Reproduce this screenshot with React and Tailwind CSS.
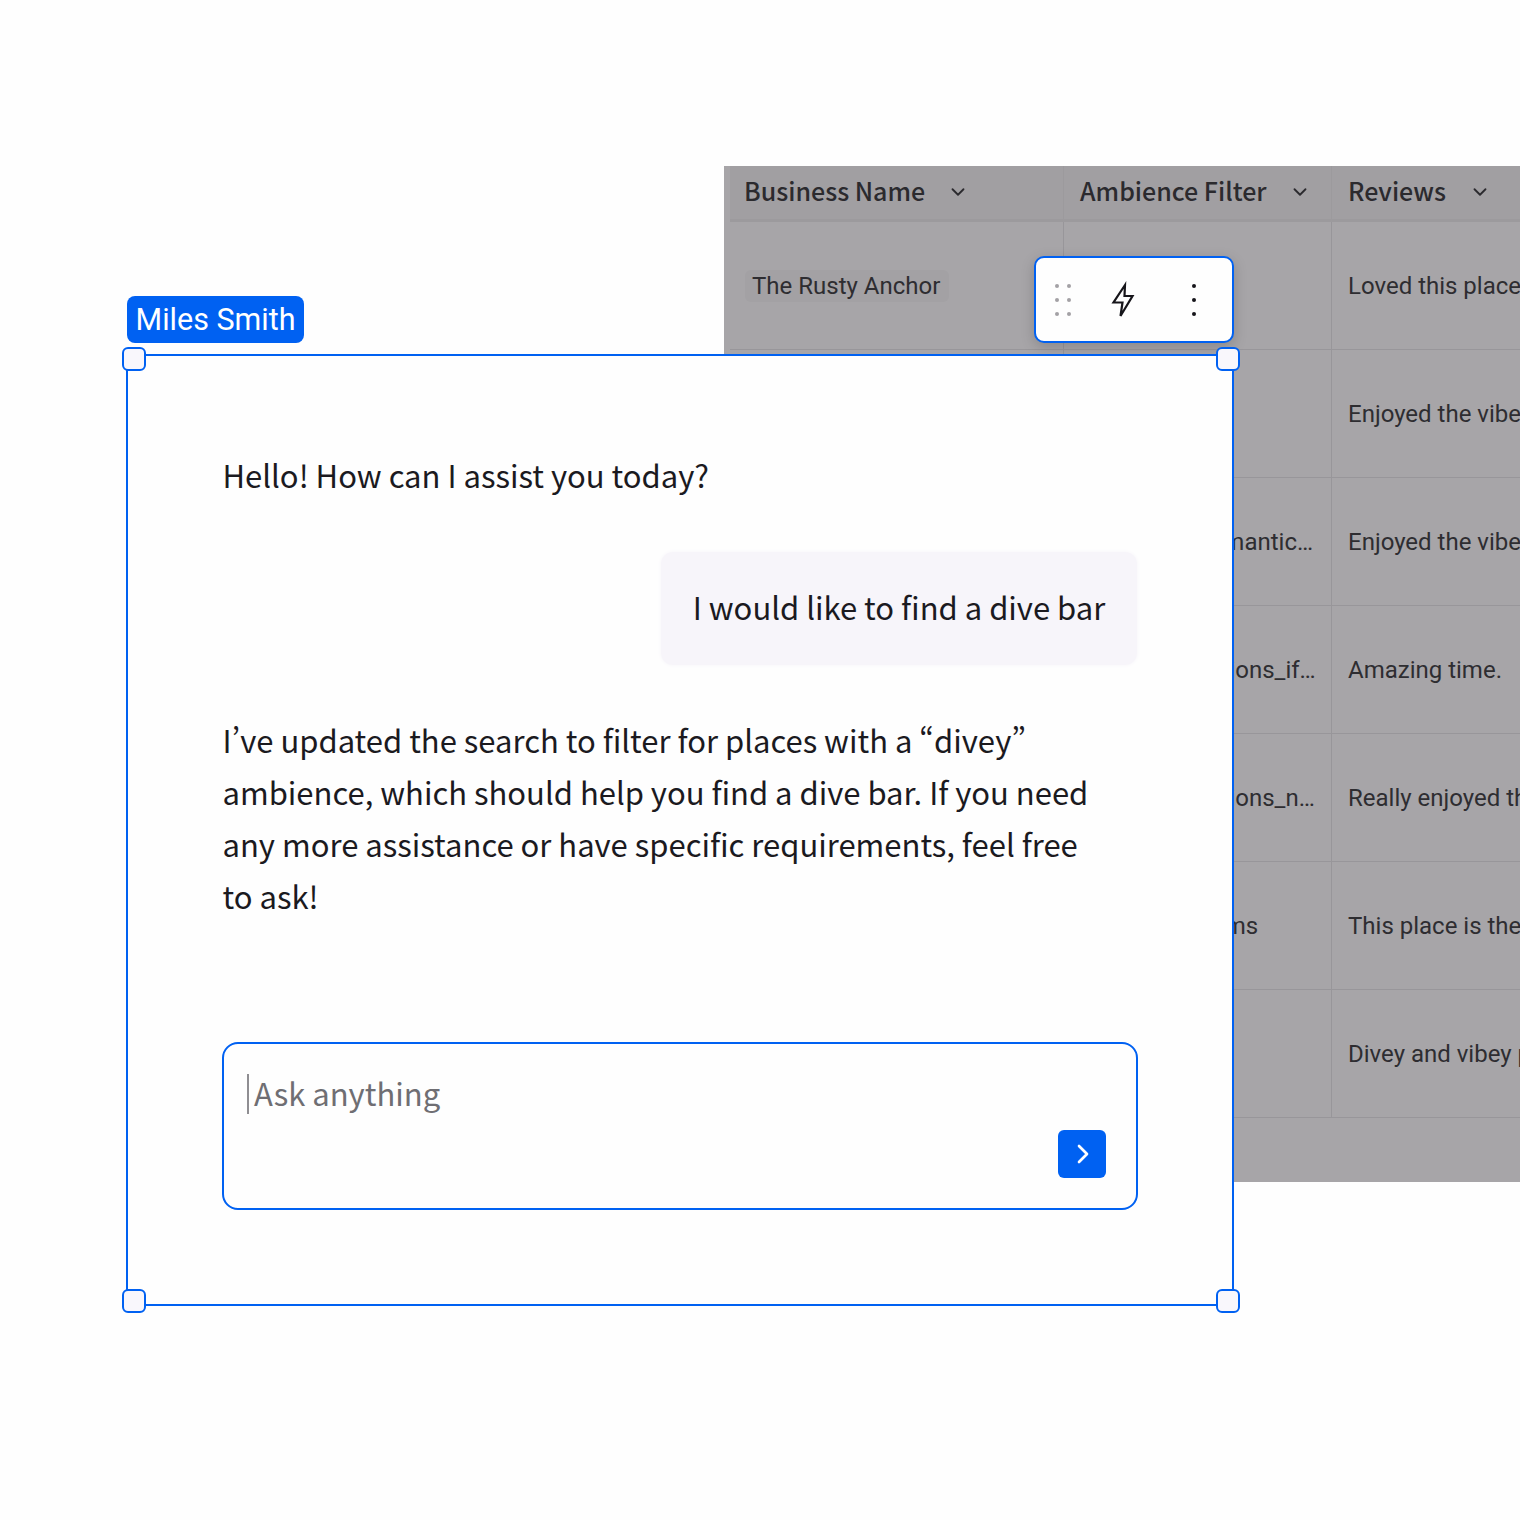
import React from 'react';
import { ChevronDown, ChevronRight } from 'lucide-react';

const rows = [
    { name: 'The Rusty Anchor', ambience: '', review: 'Loved this place, will be back' },
    { name: '', ambience: '', review: 'Enjoyed the vibe and the drinks' },
    { name: '', ambience: 'warm_and_romantic…', review: 'Enjoyed the vibe and the music' },
    { name: '', ambience: 'recommendations_if…', review: 'Amazing time.' },
    { name: '', ambience: 'recommendations_n…', review: 'Really enjoyed the atmosphere' },
    { name: '', ambience: 'cool_for_dreams', review: 'This place is the best in town' },
    { name: '', ambience: '', review: 'Divey and vibey place to hang out' },
];

const Handle = ({ className }) => (
    <div className={`absolute h-6 w-6 rounded-md border-2 border-[#0061f2] bg-[#f9f7fc] ${className}`}></div>
);

const HeaderCell = ({ label, className, chevronClass }) => (
    <div className={`relative flex h-full items-center whitespace-nowrap pb-1 ${className}`}>
        <span className="font-['Noto_Sans_CJK_SC',sans-serif] text-[25px] font-medium text-[#2b2a2e]">{label}</span>
        <ChevronDown className={`absolute top-[15px] h-[22px] w-[22px] text-[#2b2a2e] ${chevronClass}`} strokeWidth={2} />
    </div>
);

const Toolbar = () => (
    <div className="absolute left-[1034px] top-[256px] flex h-[87px] w-[200px] items-center rounded-[10px] border-2 border-[#0061f2] bg-[#fefefe] shadow-[0_4px_14px_rgba(0,0,0,0.18)]">
        <div className="ml-[19px] grid grid-cols-2 gap-x-[8px] gap-y-[10px]">
            {[0, 1, 2, 3, 4, 5].map((i) => (
                <span key={i} className="h-1 w-1 rounded-full bg-[#a3a1a5]"></span>
            ))}
        </div>
        <svg className="ml-[39px] h-[40px] w-[26px]" viewBox="0 0 26 40" fill="none">
            <path d="M15 5 L3.5 22.5 H12.5 L10.5 36 L22.5 16 H14.5 Z" stroke="#16151a" strokeWidth="2.2" strokeLinejoin="miter" />
        </svg>
        <div className="ml-[56px] flex flex-col gap-[10px]">
            <span className="h-1 w-1 rounded-full bg-[#16151a]"></span>
            <span className="h-1 w-1 rounded-full bg-[#16151a]"></span>
            <span className="h-1 w-1 rounded-full bg-[#16151a]"></span>
        </div>
    </div>
);

const ChatCard = () => (
    <div className="absolute left-[126px] top-[354px] flex h-[952px] w-[1108px] flex-col border-2 border-[#0061f2] bg-[#fefefe] pb-[94px] pl-[94px] pr-[95px] pt-[93px] font-['Noto_Sans_CJK_SC',sans-serif] text-[31px] leading-[52px] text-[#1b1a1f] [font-feature-settings:'pwid']">
        <Handle className="-left-[6px] -top-[9px]" />
        <Handle className="-right-[8px] -top-[9px]" />
        <Handle className="-bottom-[9px] -left-[6px]" />
        <Handle className="-bottom-[9px] -right-[8px]" />

        <p className="pl-[0.5px]">Hello! How can I assist you today?</p>

        <div className="mt-[51px] flex justify-end">
            <div className="flex h-[113px] w-[476px] items-center justify-center rounded-xl bg-[#f7f5fa] pb-1 shadow-[0_0_4px_#f7f5fa]">
                I would like to find a dive bar
            </div>
        </div>

        <p className="mt-[49px] pl-[0.5px]">
            I’ve updated the search to filter for places with a “divey”
            <br />
            ambience, which should help you find a dive bar. If you need
            <br />
            any more assistance or have specific requirements, feel free
            <br />
            to ask!
        </p>

        <div className="relative -mr-[1px] mt-auto h-[168px] rounded-2xl border-2 border-[#0061f2]">
            <div className="flex pl-[23px] pt-[23px] text-[#6f6e73]">
                <span className="mr-[5px] mt-[7px] h-[40px] w-[2px] bg-[#8f8e92]"></span>
                <span>Ask anything</span>
            </div>
            <button className="absolute bottom-[30px] right-[30px] flex h-12 w-12 items-center justify-center rounded-md bg-[#0061f2] text-white">
                <ChevronRight className="ml-[2px] h-8 w-8" strokeWidth={2} />
            </button>
        </div>
    </div>
);

const App = () => {
    return (
        <div className="relative h-[1520px] w-[1520px] overflow-hidden bg-[#fefefe]">
            <div className="ml-[724px] mt-[166px] h-[1016px] bg-[#a7a5a8] pl-[6px] font-['Roboto',sans-serif] text-[24px] text-[#2e2d31]">
                <div className="grid h-[56px] grid-cols-[334px_268px_1fr] border-b-[3px] border-[#9c9a9d] bg-[#a19fa2]">
                    <HeaderCell label="Business Name" className="border-r border-[#9c9a9d] pl-[14px]" chevronClass="left-[217px]" />
                    <HeaderCell label="Ambience Filter" className="border-r border-[#9c9a9d] pl-[16px]" chevronClass="left-[225px]" />
                    <HeaderCell label="Reviews" className="pl-[16px]" chevronClass="left-[137px]" />
                </div>
                {rows.map((row, i) => (
                    <div key={i} className="grid h-[128px] grid-cols-[334px_268px_1fr] border-b border-[#98969a]">
                        <div className="flex items-center border-r border-[#98969a] pl-[15px]">
                            {row.name && (
                                <span className="rounded-md bg-[#a3a1a4] pl-[7px] pr-[9px] leading-8">{row.name}</span>
                            )}
                        </div>
                        <div className="flex items-center whitespace-nowrap border-r border-[#98969a] pl-[16px]">{row.ambience}</div>
                        <div className="flex items-center overflow-hidden whitespace-nowrap pl-[16px]">{row.review}</div>
                    </div>
                ))}
            </div>

            <div className="absolute left-[127px] top-[296px] flex h-[47px] w-[177px] items-center justify-center rounded-lg bg-[#0061f2] font-['Roboto',sans-serif] text-[30.5px] text-white">
                Miles Smith
            </div>

            <Toolbar />
            <ChatCard />
        </div>
    );
};

export default App;
